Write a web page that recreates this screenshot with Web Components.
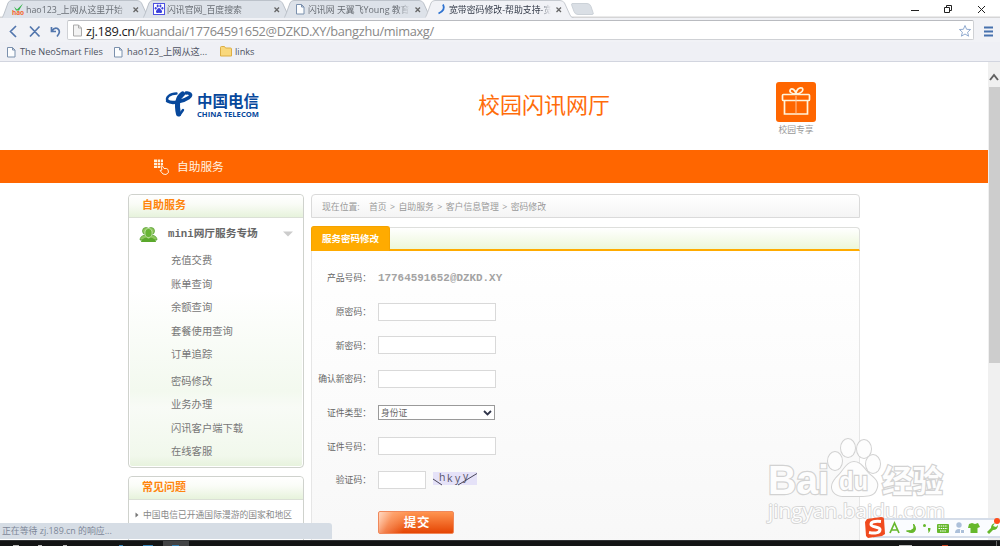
<!DOCTYPE html>
<html lang="zh-CN">
<head>
    <title>宽带密码修改-帮助支持</title>
    <meta charset="UTF-8">
    <meta name="viewport" content="width=device-width, initial-scale=1.0">
    <style>
        body {
            margin: 0;
            overflow: hidden;
            font-family: "Open Sans", "Noto Sans CJK SC", sans-serif;
        }
    </style>
</head>
<body>

<browser-window>
    <tab-strip slot="tabs">
        <browser-tab>
            <svg slot="icon" width="12" height="12" viewBox="0 0 12 12" overflow="visible"><path d="M2 3.500l3 3 6-6-4 7H4z" fill="#35b44a"/><text x="0" y="12" font-size="6.500" font-weight="bold" fill="#f4652c" font-family="Open Sans, sans-serif" textLength="12">hao</text></svg>
            hao123_上网从这里开始
        </browser-tab>
        <browser-tab>
            <svg slot="icon" width="12" height="12" viewBox="0 0 12 12"><rect x=".5" y=".5" width="11" height="11" fill="#fff" stroke="#4e52e0"/><g fill="#3b40dc"><ellipse cx="2.7" cy="5.2" rx="1" ry="1.3"/><ellipse cx="4.7" cy="3" rx="1" ry="1.4"/><ellipse cx="7.4" cy="3" rx="1" ry="1.4"/><ellipse cx="9.4" cy="5.2" rx="1" ry="1.3"/><path d="M6 5c1.400 0 1.500 1.200 2.500 2.200S9.300 10 7.800 10 6.800 9.700 6 9.700 5.500 10 4.200 10 2.500 8.200 3.500 7.200 4.600 5 6 5z"/></g></svg>
            闪讯官网_百度搜索
        </browser-tab>
        <browser-tab>
            <page-icon slot="icon"></page-icon>
            闪讯网 天翼飞Young 教育
        </browser-tab>
        <browser-tab active>
            <svg slot="icon" width="12" height="12" viewBox="0 0 12 12"><path d="M8 1.500Q11 7 3.500 10.500" fill="none" stroke="#2f73d0" stroke-width="1.800"/></svg>
            宽带密码修改-帮助支持-宽
        </browser-tab>
    </tab-strip>

    <tool-bar slot="toolbar"><b>zj.189.cn</b>/kuandai/17764591652@DZKD.XY/bangzhu/mimaxg/</tool-bar>

    <bookmark-bar slot="bookmarks">
        <book-mark style="width:107px"><page-icon slot="icon"></page-icon>The NeoSmart Files</book-mark>
        <book-mark style="width:108px"><page-icon slot="icon"></page-icon>hao123_上网从这...</book-mark>
        <book-mark>
            <svg slot="icon" width="12" height="11" viewBox="0 0 12 11"><path d="M.5 10V1.500q0-1 1-1h3l1 1.500h5q1 0 1 1v7z" fill="#f9d87c" stroke="#dcae45"/></svg>
            links
        </book-mark>
    </bookmark-bar>

    <site-header></site-header>
    <site-nav>自助服务</site-nav>
    <site-content>
        <side-panel slot="side" style="height:274px">
            <span slot="title">自助服务</span>
            <menu-group>
                <span slot="title">mini网厅服务专场</span>
                <menu-item>充值交费</menu-item>
                <menu-item>账单查询</menu-item>
                <menu-item>余额查询</menu-item>
                <menu-item>套餐使用查询</menu-item>
                <menu-item class="last">订单追踪</menu-item>
                <menu-item>密码修改</menu-item>
                <menu-item>业务办理</menu-item>
                <menu-item>闪讯客户端下载</menu-item>
                <menu-item>在线客服</menu-item>
            </menu-group>
        </side-panel>
        <side-panel slot="side" plain style="height:90px">
            <span slot="title">常见问题</span>
            <faq-item>中国电信已开通国际漫游的国家和地区</faq-item>
        </side-panel>
        <bread-crumbs>
            <span>首页</span><span>自助服务</span><span>客户信息管理</span><span>密码修改</span>
        </bread-crumbs>
        <tab-panel>
            <span slot="tab">服务密码修改</span>
            <form-row label="产品号码："><span class="account">17764591652@DZKD.XY</span></form-row>
            <form-row label="原密码："><text-box></text-box></form-row>
            <form-row label="新密码："><text-box></text-box></form-row>
            <form-row label="确认新密码："><text-box></text-box></form-row>
            <form-row label="证件类型："><select-box>身份证</select-box></form-row>
            <form-row label="证件号码："><text-box></text-box></form-row>
            <form-row label="验证码："><text-box short></text-box><captcha-image></captcha-image></form-row>
            <submit-button>提交</submit-button>
        </tab-panel>
    </site-content>

    <status-bubble slot="overlay">正在等待 zj.189.cn 的响应...</status-bubble>
    <water-mark slot="overlay"></water-mark>
    <ime-bar slot="overlay"></ime-bar>
</browser-window>

<template id="browser-window-template">
    <style>
        :host {
            display: flex;
            flex-direction: column;
            position: relative;
            width: 1000px;
            height: 546px;
            overflow: hidden;
            background: #fff;
        }
        .viewport {
            display: flex;
            height: 478px;
        }
        .page {
            width: 988px;
            overflow: hidden;
            background: #fff;
        }
        .scrollbar {
            display: flex;
            flex-direction: column;
            align-items: center;
            width: 12px;
            background: #f0f0f0;
        }
        .scrollbar svg {
            height: 25px;
        }
        .thumb {
            width: 11px;
            height: 276px;
            background: #cdcdcd;
        }
        .taskbar {
            display: flex;
            height: 6px;
            background: #131415;
        }
        .taskbar svg {
            display: block;
        }
    </style>
    <slot name="tabs"></slot>
    <slot name="toolbar"></slot>
    <slot name="bookmarks"></slot>
    <div class="viewport">
        <div class="page"><slot></slot></div>
        <div class="scrollbar">
            <svg width="12" height="25"><path d="M2 18l4-5 4 5" fill="none" stroke="#606060" stroke-width="2"/></svg>
            <div class="thumb"></div>
        </div>
    </div>
    <div class="taskbar">
        <svg width="1000" height="6"><path d="M0 .5h1000" stroke="#303234"/><path d="M163 1h26v5h-26z" fill="#424345"/><path d="M119 5.500h4M143 5.500h10M172 5.500h7" stroke="#3481b6"/><path d="M13 5.500h6M38 5.500h4M63 5.500h4M899 5.500h13" stroke="#bbb"/><path d="M942 5.500h6" stroke="#d0431f"/><path d="M996.500 1v5" stroke="#666"/></svg>
    </div>
    <slot name="overlay"></slot>
</template>

<template id="tab-strip-template">
    <style>
        :host {
            display: flex;
            height: 18px;
            padding-left: 2px;
            box-sizing: border-box;
            background: linear-gradient(#fff 16px, #d5d5d6 17px);
        }
        .new {
            margin: 3px 0 0 4px;
        }
        .controls {
            display: flex;
            margin-left: auto;
        }
    </style>
    <slot></slot>
    <svg class="new" width="25" height="13"><path d="M2 .5h15q3 0 4 3l2 6q1 2-1 2H8q-3 0-4-3L2 3q-1-2.500 0-2.500z" fill="#dadfe5" stroke="#ccd2d8"/></svg>
    <svg class="controls" width="96" height="18" fill="none" stroke="#222"><path d="M7 10.500h8"/><path d="M40.500 7.500h5v5h-5zM42.500 7.500v-2h5v5h-2M74 6l7 7M81 6l-7 7"/></svg>
</template>

<template id="browser-tab-template">
    <style>
        :host {
            display: grid;
            grid-template-columns: 12px 102px 12px;
            column-gap: 2px;
            align-items: center;
            width: 149px;
            height: 18px;
            margin-right: -8px;
            padding-left: 10px;
            box-sizing: border-box;
            position: relative;
            flex: none;
            color: #6a6f76;
            font-size: 8.900px;
            --fill: #dde2e9;
            --line: #bcc2ca;
        }
        :host([active]) {
            color: #333a48;
            --fill: #f1f2f6;
            --line: #c6cad0;
        }
        .shape {
            position: absolute;
            left: 0;
            top: 0;
            z-index: 0;
        }
        .shape path {
            fill: var(--fill);
            stroke: var(--line);
        }
        .icon, .label, .close {
            position: relative;
            display: flex;
            z-index: 1;
        }
        .label {
            display: block;
            white-space: nowrap;
            overflow: hidden;
            line-height: 17px;
            -webkit-mask-image: linear-gradient(90deg, #000 88%, transparent);
            mask-image: linear-gradient(90deg, #000 88%, transparent);
        }
    </style>
    <svg class="shape" width="149" height="18"><path d="M-1 18.500Q1 17 2 14L6 3Q7 .5 10 .5H135Q138 .5 139.500 3L145 15Q146 18 150 18.500z"/></svg>
    <span class="icon"><slot name="icon"></slot></span>
    <span class="label"><slot></slot></span>
    <svg class="close" width="12" height="18"><path d="M3.500 7.500l4.500 4.500M8 7.500l-4.500 4.500" stroke="#666" stroke-width="1.300"/></svg>
</template>

<template id="page-icon-template">
    <style>
        :host { display: block; height: 12px; }
        svg { display: block; }
    </style>
    <svg width="12" height="12"><path d="M2.500 1.500h5l2.500 2.500v7H2.500zM7.500 1.500V4H10" fill="#fcfdfe" stroke="#7b90ad"/></svg>
</template>

<template id="tool-bar-template">
    <style>
        :host {
            display: flex;
            align-items: center;
            height: 24px;
            background: #f1f2f6;
        }
        .buttons {
            width: 67px;
            height: 24px;
        }
        .address {
            display: flex;
            align-items: center;
            width: 907px;
            height: 20px;
            box-sizing: border-box;
            border: 1px solid #cfd1d5;
            border-top-color: #b9bbc0;
            border-radius: 2px;
            background: #fff;
        }
        .text {
            width: 878px;
            margin-left: 3px;
            white-space: nowrap;
            font-size: 12.800px;
            letter-spacing: -.34px;
            line-height: 20px;
            padding-top: 1px;
            color: #888;
        }
        ::slotted(b) {
            font-weight: normal;
            color: #222;
        }
    </style>
    <svg class="buttons" fill="none" stroke="#5276ad" stroke-width="1.700"><path d="M16 8l-5.500 5.500L16 19M30 8.500l9.500 10M39.500 8.500l-9.500 10M51.500 9v4.500h4.500M52 13q2.500-4 5.500-2.500 4 3-.5 8"/></svg>
    <div class="address">
        <svg width="15" height="18"><path d="M5.500 4h5l3 3v8h-8zM10.500 4v3h3" fill="#f3f3f3" stroke="#aaa"/></svg>
        <span class="text"><slot></slot></span>
        <svg width="14" height="18" style="margin-left:-5px"><path d="M6 4.500l1.600 3.800 4 .2-3 2.700 1 4L6 13l-3.600 2.200 1-4-3-2.700 4-.2z" fill="#fff" stroke="#91abd0"/></svg>
    </div>
    <svg width="24" height="24"><path d="M10 9.500h9M10 13.500h9M10 17.500h9" stroke="#4671ad" stroke-width="2"/></svg>
</template>

<template id="bookmark-bar-template">
    <style>
        :host {
            display: flex;
            align-items: center;
            height: 20px;
            padding-left: 5px;
            box-sizing: border-box;
            border-bottom: 1px solid #d2d5df;
            background: #eff0f5;
        }
    </style>
    <slot></slot>
</template>

<template id="book-mark-template">
    <style>
        :host {
            display: flex;
            align-items: center;
            gap: 3px;
            flex: none;
            height: 18px;
            font-size: 9.200px;
            line-height: 18px;
            color: #4d5262;
            white-space: nowrap;
        }
    </style>
    <slot name="icon"></slot><span><slot></slot></span>
</template>

<template id="site-header-template">
    <style>
        :host {
            display: grid;
            grid-template-columns: 164px 314px 298px 60px;
            height: 88px;
        }
        .logo {
            grid-column: 2;
            margin-top: 27px;
        }
        h1 {
            margin: 26px 0 0;
            font-size: 22px;
            line-height: 32px;
            font-weight: 400;
            color: #ff6c0a;
        }
        .gift {
            width: 40px;
            margin-top: 20px;
            text-align: center;
            white-space: nowrap;
            font-size: 8.800px;
            line-height: 15px;
            color: #999;
        }
        .gift svg {
            display: block;
            margin-bottom: 1px;
        }
    </style>
    <svg class="logo" width="98" height="34" fill="#07489c">
        <g fill="none" stroke="#07489c" stroke-linecap="round">
            <path d="M12.500 4.500C6 4.500 1.500 8.500 3.500 12" stroke-width="2.400"/>
            <path d="M3.500 12C8 15.500 20 12 25 8.500c4-3 0-5-3-4.500" stroke-width="3.400"/>
            <path d="M18.500 5C13 9 12.500 16 14.500 25" stroke-width="5"/>
            <path d="M15.500 26l3.500-5" stroke-width="2.400"/>
        </g>
        <text x="33" y="18" font-family="Noto Sans CJK SC, sans-serif" font-size="15.500" font-weight="700" textLength="62">中国电信</text>
        <text x="33" y="28" font-family="Open Sans, sans-serif" font-size="7" font-weight="700" textLength="62" lengthAdjust="spacingAndGlyphs">CHINA TELECOM</text>
    </svg>
    <h1>校园闪讯网厅</h1>
    <div class="gift">
        <svg width="40" height="40"><rect width="40" height="40" rx="3" fill="#ff6600"/><g fill="none" stroke="#fff4dc" stroke-width="1.700"><rect x="6.500" y="12.500" width="27" height="6" rx="1"/><path d="M8.500 18.500V32h23V18.500"/><path d="M20 14V32" stroke="#ffc49b" stroke-width="1"/><path d="M20 12c-5 0-7-2.500-5.500-4.500s5 .5 5.500 4.500zM20 12c0-4 3-7 6-6 2.500 2-1 6-6 6z"/></g></svg>
        校园专享
    </div>
</template>

<template id="site-nav-template">
    <style>
        :host {
            display: flex;
            align-items: center;
            gap: 7px;
            height: 33px;
            padding: 0 0 2px 153px;
            box-sizing: border-box;
            background: #ff6600;
            color: #fff2e0;
            font-size: 11.700px;
        }
        svg {
            margin-top: 2px;
        }
    </style>
    <svg width="17" height="17"><g fill="#fff0db"><path d="M1 1.500h3v2.500H1zM4.700 1.500h2.500v2.500H4.700zM8 1.500h2v2.500H8zM1 4.700h3v2.300H1zM4.700 4.700h2.500v2.300H4.700zM8 4.700h2v2.300H8zM1 7.700h3V10H1zM4.700 7.700h2.500V10H4.700z"/></g><path d="M8 8q1.500-1 2 1l1 1.500q3-.5 4 1l.5 3-2.500 2-3-.5-3-3.500 2-.5z" fill="#ff6600" stroke="#fff0db"/></svg>
    <slot></slot>
</template>

<template id="site-content-template">
    <style>
        :host {
            display: grid;
            grid-template-columns: 176px 549px;
            column-gap: 7px;
            height: 357px;
            padding: 11px 0 0 128px;
            box-sizing: border-box;
            color: #666;
        }
        .side, .main {
            display: flex;
            flex-direction: column;
            gap: 8px;
        }
    </style>
    <div class="side"><slot name="side"></slot></div>
    <div class="main"><slot></slot></div>
</template>

<template id="side-panel-template">
    <style>
        :host {
            display: block;
            flex: none;
            box-sizing: border-box;
            border: 1px solid #cfd2cd;
            border-radius: 4px;
            background: linear-gradient(#fff 35%, #f3f9ef 72%, #f8fbf6 78%, #f1f8ec 96%, #e6f2dc);
            box-shadow: inset 0 0 0 1px #fff;
        }
        :host([plain]) {
            background: #fff;
        }
        .title {
            height: 22px;
            padding-left: 13px;
            border-bottom: 1px solid #dbe0d6;
            border-radius: 4px 4px 0 0;
            background: linear-gradient(#fff, #fafcf7 40%, #e7f3dc);
            font-size: 11px;
            line-height: 20px;
            font-weight: bold;
            color: #ff850d;
        }
    </style>
    <div class="title"><slot name="title"></slot></div>
    <slot></slot>
</template>

<template id="menu-group-template">
    <style>
        :host {
            display: block;
            padding-left: 42px;
        }
        .head {
            display: flex;
            align-items: center;
            height: 32px;
            margin: 0 0 -.6px -32px;
            font: bold 10.700px/32px "Liberation Mono", "Noto Sans CJK SC", monospace;
            color: #666;
            white-space: nowrap;
        }
        .people {
            margin-right: 10px;
        }
        .arrow {
            margin-left: auto;
            margin-right: 9px;
        }
    </style>
    <div class="head">
        <svg class="people" width="19" height="17"><g fill="#8fc65c" stroke="#4e9b28" stroke-width=".7"><circle cx="7" cy="5" r="3.500"/><circle cx="12" cy="5" r="3.500"/><path d="M1 14q0-4 5-5h7q5 1 5 5z"/></g><ellipse cx="9.500" cy="7" rx="3.600" ry="4.500" fill="#68b534" stroke="#e4f4d4" stroke-width=".6"/><path d="M2 16q0-3 5.500-4.500L9.500 13l2-1.500Q17 13 17 16z" fill="#5aa82b"/></svg>
        <slot name="title"></slot>
        <svg class="arrow" width="12" height="6"><path d="M1 .5h10L6 5.500z" fill="#ccc"/></svg>
    </div>
    <slot></slot>
</template>

<template id="menu-item-template">
    <style>
        :host {
            display: block;
            height: 23.500px;
            font-size: 10.300px;
            line-height: 23.500px;
            color: #777;
        }
        :host(.last) {
            margin-bottom: 3px;
        }
    </style>
    <slot></slot>
</template>

<template id="faq-item-template">
    <style>
        :host {
            display: flex;
            align-items: center;
            gap: 4px;
            height: 29px;
            padding-left: 6px;
            font-size: 8.780px;
            color: #888;
            white-space: nowrap;
        }
    </style>
    <svg width="4" height="6"><path d="M.5 .5v5L3.500 3z" fill="#777"/></svg>
    <slot></slot>
</template>

<template id="bread-crumbs-template">
    <style>
        :host {
            display: flex;
            align-items: center;
            height: 24px;
            flex: none;
            padding-left: 10px;
            box-sizing: border-box;
            border: 1px solid #dadada;
            border-radius: 4px 4px 0 0;
            background: linear-gradient(#fff, #f4f4f4);
            font-size: 8.850px;
            color: #999;
        }
        .where {
            width: 47px;
        }
        ::slotted(span:not(:last-child))::after {
            content: ">";
            margin: 0 3.400px;
        }
    </style>
    <span class="where">现在位置:</span>
    <slot></slot>
</template>

<template id="tab-panel-template">
    <style>
        :host {
            display: flex;
            flex-direction: column;
            flex: 1;
        }
        .tabs {
            display: flex;
            align-items: flex-end;
            height: 25px;
        }
        .tab {
            width: 79px;
            height: 25px;
            box-sizing: border-box;
            padding-left: 10px;
            border: 1px solid #f5a300;
            border-bottom: 0;
            border-radius: 3px 3px 0 0;
            background: #ffab00;
            color: #fff;
            font-size: 9.500px;
            font-weight: bold;
            line-height: 24px;
            white-space: nowrap;
        }
        .rest {
            flex: 1;
            height: 24px;
            box-sizing: border-box;
            border: 1px solid #dedfdc;
            border-bottom: 2px solid #ffab00;
            border-left: 0;
            border-radius: 0 4px 0 0;
            background: linear-gradient(#fff, #ecf7d9);
        }
        .body {
            flex: 1;
            box-sizing: border-box;
            padding-top: 10px;
            border: solid #e6e6e6;
            border-width: 0 1px;
            background: linear-gradient(#fff, #f7f7f7);
        }
    </style>
    <div class="tabs"><div class="tab"><slot name="tab"></slot></div><div class="rest"></div></div>
    <div class="body"><slot></slot></div>
</template>

<template id="form-row-template">
    <style>
        :host {
            display: grid;
            grid-template-columns: 59px 1fr;
            column-gap: 7px;
            align-items: center;
            height: 33.700px;
        }
        .label {
            font-size: 8.800px;
            text-align: right;
            white-space: nowrap;
        }
        .field {
            display: flex;
            align-items: center;
            gap: 7px;
        }
        ::slotted(.account) {
            font: bold 10.900px "Liberation Mono", monospace;
            color: #a3a3a3;
        }
    </style>
    <span class="label"></span>
    <span class="field"><slot></slot></span>
</template>

<template id="text-box-template">
    <style>
        :host {
            display: flex;
            width: 118px;
            height: 18px;
        }
        :host([short]) {
            width: 48px;
        }
        input {
            width: 100%;
            box-sizing: border-box;
            border: 1px solid #d9d9d9;
            background: #fff;
        }
    </style>
    <input type="text">
</template>

<template id="select-box-template">
    <style>
        :host {
            display: flex;
            align-items: center;
            justify-content: space-between;
            width: 117px;
            height: 15px;
            padding: 0 2px;
            box-sizing: border-box;
            border: 1px solid #9a9a9a;
            background: #fff;
            font-size: 8.800px;
            line-height: 12px;
        }
    </style>
    <slot></slot>
    <svg width="9" height="6"><path d="M1 1l3.500 3.500L8 1" fill="none" stroke="#30354a" stroke-width="1.800"/></svg>
</template>

<template id="captcha-image-template">
    <style>
        :host { display: block; height: 18px; margin-top: -3px; }
        svg { display: block; }
    </style>
    <svg width="44" height="18">
        <rect y="3" width="44" height="13" fill="#e5e2f8"/>
        <g font-family="Open Sans, sans-serif" font-size="10.500" fill="#555368"><text x="6" y="11.500">h</text><text x="14" y="12.500">k</text><text x="22" y="13">y</text><text x="30" y="11">y</text></g>
        <path d="M0 10l9 6M25 16L44 4.500" fill="none" stroke="#484659"/>
    </svg>
</template>

<template id="submit-button-template">
    <style>
        :host {
            display: block;
            padding: 14px 0 0 66px;
        }
        button {
            display: block;
            width: 76px;
            height: 23px;
            padding: 0;
            border: 1px solid #f0885a;
            border-radius: 2px;
            background: linear-gradient(115deg, #ffd6bf 0, rgba(255, 180, 140, .5) 18%, rgba(255, 140, 80, 0) 40%), linear-gradient(#ff9450, #e54503);
            color: #fff;
            font: bold 12.500px/20px "Noto Sans CJK SC", sans-serif;
            letter-spacing: .8px;
            text-indent: 2px;
        }
    </style>
    <button type="button"><slot></slot></button>
</template>

<template id="status-bubble-template">
    <style>
        :host {
            display: block;
            position: absolute;
            left: 0;
            bottom: 7px;
            width: 332px;
            height: 16px;
            padding-left: 2px;
            box-sizing: border-box;
            border-radius: 0 3px 0 0;
            background: #d6dde5;
            color: #7d8798;
            font-size: 8.900px;
            line-height: 16px;
        }
    </style>
    <slot></slot>
</template>

<template id="water-mark-template">
    <style>
        :host {
            display: block;
            position: absolute;
            left: 760px;
            top: 432px;
        }
    </style>
    <svg width="190" height="96" fill="#fdfdfd" stroke="#d2d2d2" stroke-width="2.400" paint-order="stroke" font-family="Liberation Sans, Noto Sans CJK SC, sans-serif">
        <text x="8" y="62" font-size="40" font-weight="700" textLength="61" lengthAdjust="spacingAndGlyphs">Bai</text>
        <g stroke-width="2">
            <ellipse cx="75" cy="29" rx="7" ry="9"/>
            <ellipse cx="88" cy="16" rx="7" ry="9"/>
            <ellipse cx="104" cy="17" rx="7" ry="9"/>
            <ellipse cx="113" cy="32" rx="7" ry="9"/>
            <path d="M94 30c7 0 10 7 15 12 8 6 10 10 7 16-3 7-11 6-22 6s-17 1-21-5c-3-6 1-11 7-17 5-6 8-12 14-12z"/>
        </g>
        <text x="79" y="58" font-size="25" font-weight="700" textLength="29" lengthAdjust="spacingAndGlyphs">du</text>
        <text x="122" y="60" font-size="31" font-weight="700" textLength="61" lengthAdjust="spacingAndGlyphs">经验</text>
        <text x="8" y="86" font-family="Open Sans, sans-serif" font-size="20" stroke-width="1.600" textLength="177" lengthAdjust="spacingAndGlyphs">jingyan.baidu.com</text>
    </svg>
</template>

<template id="ime-bar-template">
    <style>
        :host {
            display: block;
            position: absolute;
            left: 864px;
            top: 516px;
        }
    </style>
    <svg width="136" height="24">
        <rect x="10" y="3" width="130" height="18" fill="#fafcff" stroke="#d5dde9" stroke-width="2"/>
        <path d="M3 3l14-2q3 0 3 2l1 15-3 2-14 2-2-2L1 6z" fill="#f04b20"/>
        <path d="M17 5.500q-10-1-10 3c0 3 9 2 9 5 0 4-6 4-11 3" fill="none" stroke="#fff" stroke-width="3"/>
        <g fill="#66b82c">
            <path d="M26 17l4.500-10 4.500 10M28 14h5" fill="none" stroke="#66b82c" stroke-width="1.700"/>
            <path d="M49.500 8q2.500 7-7 7 8 4 9-2 0-3-2-5z" stroke="#66b82c"/>
            <circle cx="60.500" cy="9.500" r="1.500"/><path d="M64 12h2.500q0 4-2.500 5 1-2 0-3z"/>
            <rect x="73" y="8" width="12" height="9" rx="1"/>
            <path d="M105 8l3-1 3 1 3-1 2 4-2.500 1v5h-7v-5L104 12z"/>
            <path d="M131 7l-2 3 3 1 2-2q0 5-5 5l-4 4-2-2 4-4q0-4 4-5z"/>
        </g>
        <path d="M74.500 10h9M74.500 12.500h9M76 15h6" stroke="#fff" stroke-dasharray="1.500 .7"/>
        <g fill="#acc0da"><circle cx="95" cy="9" r="2.700"/><path d="M91 17q0-4 4-4t4 4z"/><path d="M96.500 13.500h4v4h-4z" stroke="#fff"/></g>
        <circle cx="133" cy="5" r="3" fill="#ff4b19"/>
    </svg>
</template>

<script>
    function registerTemplate(tagName, setup) {
        class TemplateComponent extends HTMLElement {
            constructor() {
                super();
                const template = document.getElementById(`${tagName}-template`);
                const shadow = this.attachShadow({mode: 'open'});
                shadow.appendChild(template.content.cloneNode(true));
            }

            connectedCallback() {
                if (setup) {
                    setup(this);
                }
            }
        }
        customElements.define(tagName, TemplateComponent);
    }

    // row labels come in as an attribute, everything else is slotted
    registerTemplate('form-row', row => {
        row.shadowRoot.querySelector('.label').textContent = row.getAttribute('label');
    });

    [
        'browser-window', 'tab-strip', 'browser-tab', 'page-icon', 'tool-bar',
        'bookmark-bar', 'book-mark', 'site-header', 'site-nav', 'site-content',
        'side-panel', 'menu-group', 'menu-item', 'faq-item', 'bread-crumbs',
        'tab-panel', 'text-box', 'select-box', 'captcha-image', 'submit-button',
        'status-bubble', 'water-mark', 'ime-bar'
    ].forEach(tagName => registerTemplate(tagName));
</script>
</body>
</html>
